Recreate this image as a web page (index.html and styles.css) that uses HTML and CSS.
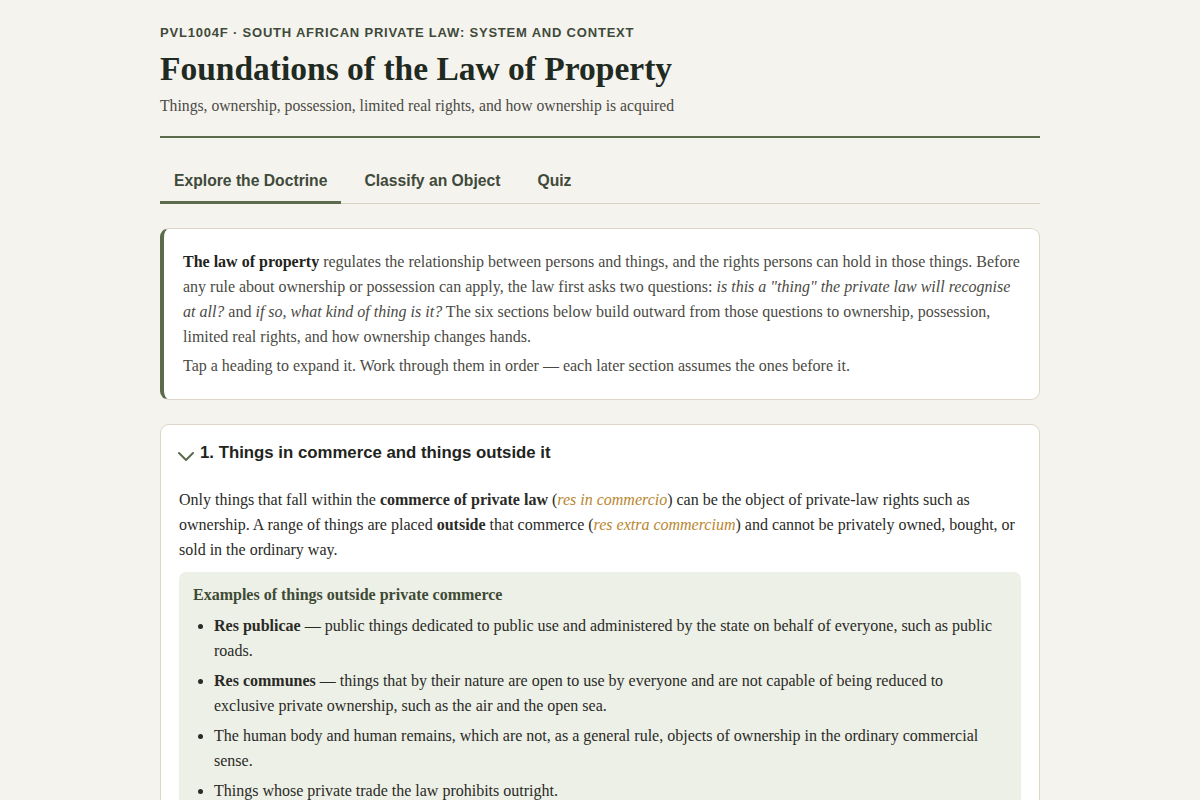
FILE: index.html
```html
<!DOCTYPE html>
<html lang="en">
<head>
<meta charset="utf-8">
<title>Foundations of the Law of Property</title>
<link rel="stylesheet" href="styles.css">
</head>
<body>
<div class="page">
  <header class="masthead">
    <div class="eyebrow">PVL1004F · South African Private Law: System and Context</div>
    <h1 class="title">Foundations of the Law of Property</h1>
    <p class="subtitle">Things, ownership, possession, limited real rights, and how ownership is acquired</p>
  </header>

  <nav class="tabs">
    <button class="tab active">Explore the Doctrine</button>
    <button class="tab">Classify an Object</button>
    <button class="tab">Quiz</button>
  </nav>

  <section class="intro">
    <p><strong>The law of property</strong> regulates the relationship between persons and things, and the rights persons can hold in those things. Before any rule about ownership or possession can apply, the law first asks two questions: <em>is this a "thing" the private law will recognise at all?</em> and <em>if so, what kind of thing is it?</em> The six sections below build outward from those questions to ownership, possession, limited real rights, and how ownership changes hands.</p>
    <p>Tap a heading to expand it. Work through them in order — each later section assumes the ones before it.</p>
  </section>

  <section class="panel">
    <div class="panel-head">
      <svg class="chev" width="18" height="12" viewBox="0 0 18 12"><path d="M2 3 L9 10 L16 3" fill="none" stroke="#5b6b4c" stroke-width="2" stroke-linecap="round" stroke-linejoin="round"/></svg>
      <h2 class="panel-title">1. Things in commerce and things outside it</h2>
    </div>
    <div class="panel-body">
      <p>Only things that fall within the <strong>commerce of private law</strong> (<em class="term">res in commercio</em>) can be the object of private-law rights such as ownership. A range of things are placed <strong>outside</strong> that commerce (<em class="term">res extra commercium</em>) and cannot be privately owned, bought, or sold in the ordinary way.</p>
      <div class="examples">
        <div class="examples-title">Examples of things outside private commerce</div>
        <ul>
          <li><strong>Res publicae</strong> — public things dedicated to public use and administered by the state on behalf of everyone, such as public roads.</li>
          <li><strong>Res communes</strong> — things that by their nature are open to use by everyone and are not capable of being reduced to exclusive private ownership, such as the air and the open sea.</li>
          <li>The human body and human remains, which are not, as a general rule, objects of ownership in the ordinary commercial sense.</li>
          <li>Things whose private trade the law prohibits outright.</li>
        </ul>
      </div>
    </div>
  </section>
</div>
</body>
</html>
```

FILE: styles.css
```css
* { box-sizing: border-box; }
html, body { margin: 0; padding: 0; }
body {
  background: #f5f3ee;
  color: #2a2a26;
  font-family: "Liberation Serif", "Times New Roman", serif;
  font-size: 16px;
  line-height: 25px;
}
.page {
  width: 880px;
  margin: 0 auto;
  padding-top: 25px;
}
.masthead {
  border-bottom: 2px solid #5b6b4c;
  padding-bottom: 19px;
}
.eyebrow {
  font-family: "Liberation Sans", Arial, sans-serif;
  font-size: 13px;
  font-weight: bold;
  letter-spacing: 0.8px;
  text-transform: uppercase;
  color: #3f4a3a;
  line-height: 16px;
}
.title {
  margin: 8px 0 0;
  font-size: 33.5px;
  line-height: 40px;
  font-weight: bold;
  color: #1f2a22;
}
.subtitle {
  margin: 6px 0 0;
  font-size: 15.7px;
  line-height: 22px;
  color: #4a4a44;
}
.tabs {
  display: flex;
  gap: 9px;
  margin-top: 24px;
  border-bottom: 1px solid #d8d2c4;
}
.tab {
  background: none;
  border: none;
  border-bottom: 3px solid transparent;
  margin-bottom: -1px;
  padding: 9px 14px 10px;
  font-family: "Liberation Sans", Arial, sans-serif;
  font-size: 15.7px;
  font-weight: bold;
  line-height: 20px;
  color: #3f4a3a;
}
.tab.active {
  border-bottom-color: #5b6b4c;
}
.intro {
  margin-top: 24px;
  background: #ffffff;
  border: 1px solid #ddd6c8;
  border-left: 4px solid #5b6b4c;
  border-radius: 9px;
  padding: 20px 16px 21px 19px;
  color: #4a4a44;
}
.intro p { margin: 0; }
.intro p + p { margin-top: 4px; }
.intro strong { color: #1f2420; }
.panel {
  margin-top: 24px;
  background: #ffffff;
  border: 1px solid #ddd6c8;
  border-radius: 9px;
}
.panel-head {
  display: flex;
  align-items: center;
  gap: 5px;
  padding: 17px 18px 12px 16px;
}
.chev { margin-top: 5px; flex: none; }
.panel-title {
  margin: 0;
  font-family: "Liberation Sans", Arial, sans-serif;
  font-size: 16.8px;
  line-height: 22px;
  font-weight: bold;
  color: #1f2420;
}
.panel-body {
  padding: 0 18px 18px;
}
.panel-body p { margin: 11px 0 0; }
.term { color: #b8862e; }
.examples {
  margin-top: 10px;
  background: #edf0e6;
  border-radius: 7px;
  padding: 10px 14px 12px;
}
.examples-title {
  font-weight: bold;
  color: #3d4a35;
}
.examples ul {
  margin: 6px 0 0;
  padding-left: 21px;
}
.examples li + li { margin-top: 5px; }
```
